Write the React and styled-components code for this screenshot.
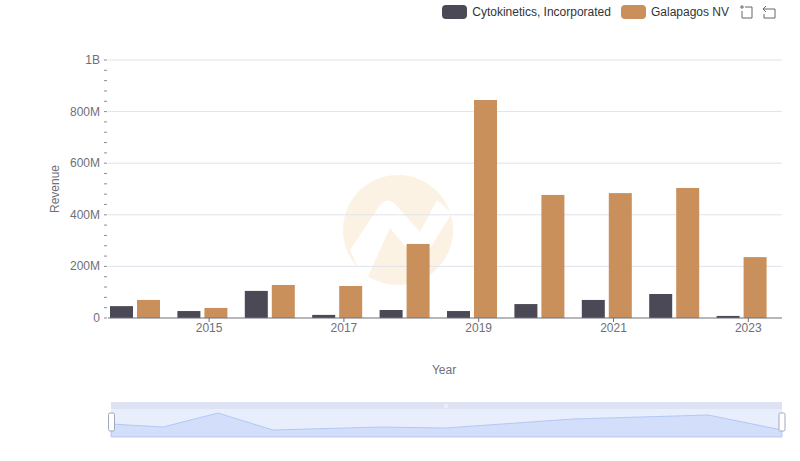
import React from "react";
import styled, { createGlobalStyle } from "styled-components";

const Global = createGlobalStyle`
  body { margin: 0; background: #fff; font-family: "Liberation Sans", Arial, sans-serif; }
`;

const Page = styled.div`
  width: 800px;
  height: 461px;
  display: flex;
  flex-direction: column;
  position: relative;
  overflow: hidden;
`;

const Legend = styled.div`
  display: flex;
  justify-content: flex-end;
  align-items: center;
  gap: 10px;
  height: 24px;
  padding: 0 23px 0 0;
  font-size: 12px;
  color: #333;
`;

const Item = styled.div`
  display: flex;
  align-items: center;
  gap: 5px;
`;

const Swatch = styled.span`
  width: 25px;
  height: 14px;
  border-radius: 4px;
  background: ${(p) => p.color};
`;

const Tools = styled.div`
  display: flex;
  gap: 6px;
  margin-left: 0;
`;

const data = [
  [46, 70], [27, 39], [105, 128], [12, 124], [31, 287],
  [27, 845], [54, 477], [70, 484], [93, 504], [8, 236],
];

const X0 = 108, X1 = 782, Y0 = 318, Y1 = 60;
const bw = (X1 - X0) / 10;
const yOf = (v) => Y0 - (v / 1000) * (Y0 - Y1);

function Chart() {
  const grid = [0, 200, 400, 600, 800, 1000];
  const labels = ["0", "200M", "400M", "600M", "800M", "1B"];
  return (
    <svg width="800" height="437" viewBox="0 24 800 437" style={{ display: "block" }}>
      <g opacity="0.9">
        <circle cx="398" cy="230" r="55" fill="#fcf1e1" />
        <path d="M350 250 L380 205 Q388 196 396 205 L420 232 L437 200 L452 213 L428 252 Q420 262 410 252 L390 228 L365 283 Z" fill="#fff" />
      </g>
      {grid.map((g, i) => (
        <g key={g}>
          {i > 0 && <line x1={X0} x2={X1} y1={yOf(g)} y2={yOf(g)} stroke="#e0e3ec" />}
          <text x={100} y={yOf(g) + 4} textAnchor="end" fontSize="12" fill="#6e7079">{labels[i]}</text>
        </g>
      ))}
      {Array.from({ length: 26 }).map((_, i) => (
        <line key={i} x1={104} x2={107} y1={Y0 - i * 10.32} y2={Y0 - i * 10.32} stroke="#6e7079" strokeWidth="0.8" />
      ))}
      {data.map(([a, b], i) => {
        const x = X0 + i * bw;
        return (
          <g key={i}>
            <rect x={x + 2} y={yOf(a)} width={23} height={Y0 - yOf(a)} fill="#4a4955" />
            <rect x={x + 29} y={yOf(b)} width={23} height={Y0 - yOf(b)} fill="#c9905c" />
          </g>
        );
      })}
      <line x1={X0} x2={X1} y1={Y0} y2={Y0} stroke="#6e7079" />
      {[1, 3, 5, 7, 9].map((i) => (
        <g key={i}>
          <line x1={X0 + (i + 0.5) * bw} x2={X0 + (i + 0.5) * bw} y1={Y0} y2={Y0 + 4} stroke="#6e7079" />
          <text x={X0 + (i + 0.5) * bw} y={332} textAnchor="middle" fontSize="12" fill="#6e7079">{2014 + i}</text>
        </g>
      ))}
      <text x={444} y={374} textAnchor="middle" fontSize="12" fill="#6e7079">Year</text>
      <text transform="translate(59 189) rotate(-90)" textAnchor="middle" fontSize="12" fill="#6e7079">Revenue</text>
      <rect x="111" y="402" width="671" height="35" fill="#e8eefc" />
      <rect x="111" y="402" width="671" height="7" fill="#dde3f2" />
      <text x="446" y="407.5" textAnchor="middle" fontSize="5" fill="#fff">III</text>
      <path d="M111 424 L163 427 L218 413 L273 430 L380 427 L445 428 L573 419 L708 415 L782 430 L782 437 L111 437 Z" fill="#d2defa" stroke="#a9c0f2" strokeWidth="0.8" />
      <rect x="108.5" y="413" width="6" height="18" rx="1.5" fill="#fff" stroke="#a0a8bc" />
      <rect x="779" y="413" width="6" height="18" rx="1.5" fill="#fff" stroke="#a0a8bc" />
    </svg>
  );
}

export default function App() {
  return (
    <Page>
      <Global />
      <Legend>
        <Item><Swatch color="#4a4955" />Cytokinetics, Incorporated</Item>
        <Item><Swatch color="#c9905c" />Galapagos NV</Item>
        <Tools>
          <svg width="16" height="16" viewBox="0 0 16 16" fill="none" stroke="#666" strokeWidth="1">
            <path d="M3 1v4M1 3h4M6 3h7v11M3 7v7h10" />
          </svg>
          <svg width="16" height="16" viewBox="0 0 16 16" fill="none" stroke="#666" strokeWidth="1">
            <path d="M5 2L2 5l3 3M2 5h12v9H3v-4" />
          </svg>
        </Tools>
      </Legend>
      <Chart />
    </Page>
  );
}
